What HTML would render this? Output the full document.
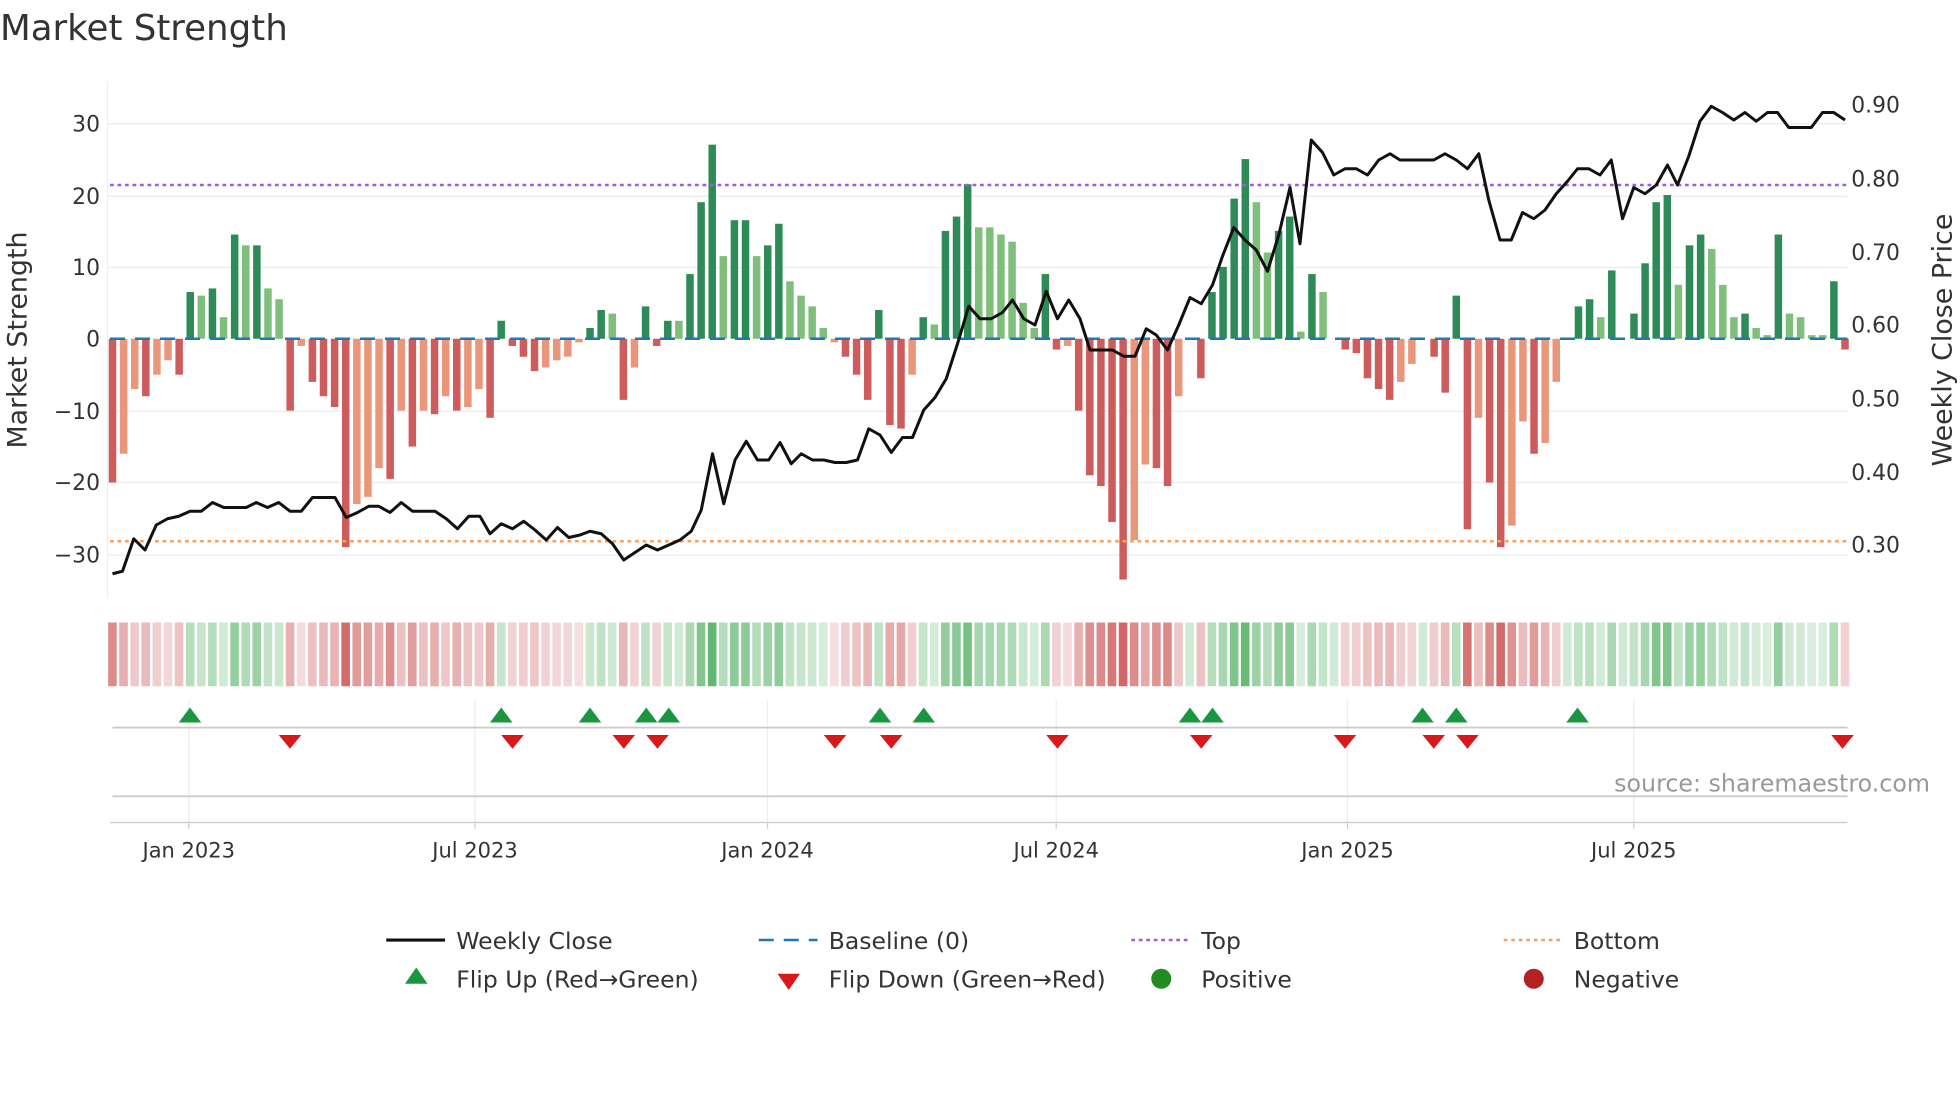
<!DOCTYPE html>
<html><head><meta charset="utf-8"><style>
html,body{margin:0;padding:0;background:#fff;width:1960px;height:1102px;overflow:hidden}
svg text{font-family:"DejaVu Sans","Liberation Sans",sans-serif;fill:#333}
</style></head><body>
<svg id="s" width="1960" height="1102" viewBox="0 0 1568 881.6" xmlns="http://www.w3.org/2000/svg">
<rect width="1568" height="882" fill="#fff"/>
<text x="0" y="32" font-size="28.5" fill="#333">Market Strength</text>
<g stroke="#ececec" stroke-width="1">
<line x1="86" x2="1478" y1="99" y2="99"/><line x1="86" x2="1478" y1="157" y2="157"/><line x1="86" x2="1478" y1="214" y2="214"/><line x1="86" x2="1478" y1="329" y2="329"/><line x1="86" x2="1478" y1="386" y2="386"/><line x1="86" x2="1478" y1="444" y2="444"/>
</g>
<line x1="86" x2="86" y1="65" y2="478" stroke="#eee"/>
<g font-size="17.5" text-anchor="end">
<text x="80" y="105">30</text><text x="80" y="163">20</text><text x="80" y="220">10</text><text x="80" y="277">0</text><text x="80" y="335">−10</text><text x="80" y="392">−20</text><text x="80" y="450">−30</text>
</g>
<g font-size="17.5">
<text x="1481" y="90">0.90</text><text x="1481" y="149">0.80</text><text x="1481" y="208">0.70</text><text x="1481" y="266">0.60</text><text x="1481" y="325">0.50</text><text x="1481" y="384">0.40</text><text x="1481" y="442">0.30</text>
</g>
<text transform="translate(21,272) rotate(-90)" font-size="21.5" text-anchor="middle">Market Strength</text>
<text transform="translate(1561,272) rotate(-90)" font-size="21.5" text-anchor="middle">Weekly Close Price</text>
<g id="bars"></g>
<line x1="88" x2="1478" y1="271" y2="271" stroke="#1f77b4" stroke-width="2" stroke-dasharray="12,8"/>
<line x1="88" x2="1478" y1="148" y2="148" stroke="#9b5de5" stroke-width="2" stroke-dasharray="3,3"/>
<line x1="88" x2="1478" y1="433" y2="433" stroke="#f4a261" stroke-width="2" stroke-dasharray="3,3"/>
<polyline id="line" fill="none" stroke="#111" stroke-width="2.4" stroke-linejoin="round"/>
<g id="heat"></g>
<g stroke="#eee"><line x1="151" x2="151" y1="560" y2="658"/><line x1="380" x2="380" y1="560" y2="658"/><line x1="614" x2="614" y1="560" y2="658"/><line x1="845" x2="845" y1="560" y2="658"/><line x1="1078" x2="1078" y1="560" y2="658"/><line x1="1307" x2="1307" y1="560" y2="658"/></g>
<line x1="90" x2="1478" y1="582" y2="582" stroke="#ccc" stroke-width="1.5"/>
<line x1="90" x2="1478" y1="637" y2="637" stroke="#ccc" stroke-width="1.5"/>
<g id="flips"></g>
<text x="1544" y="633" font-size="19" text-anchor="end" style="fill:#999">source: sharemaestro.com</text>
<line x1="88" x2="1478" y1="658" y2="658" stroke="#ccc"/>
<g stroke="#ccc"><line x1="151" x2="151" y1="658" y2="663"/><line x1="380" x2="380" y1="658" y2="663"/><line x1="614" x2="614" y1="658" y2="663"/><line x1="845" x2="845" y1="658" y2="663"/><line x1="1078" x2="1078" y1="658" y2="663"/><line x1="1307" x2="1307" y1="658" y2="663"/></g>
<g font-size="16.8" text-anchor="middle">
<text x="151" y="686">Jan 2023</text><text x="380" y="686">Jul 2023</text><text x="614" y="686">Jan 2024</text><text x="845" y="686">Jul 2024</text><text x="1078" y="686">Jan 2025</text><text x="1307" y="686">Jul 2025</text>
</g>
<g font-size="18.8">
<line x1="309" x2="356" y1="752" y2="752" stroke="#111" stroke-width="2.5"/><text x="365" y="759">Weekly Close</text>
<line x1="607" x2="654" y1="752" y2="752" stroke="#1f77b4" stroke-width="2" stroke-dasharray="12,8"/><text x="663" y="759">Baseline (0)</text>
<line x1="905" x2="950" y1="752" y2="752" stroke="#9b5de5" stroke-width="2" stroke-dasharray="3,3"/><text x="961" y="759">Top</text>
<line x1="1203" x2="1248" y1="752" y2="752" stroke="#f4a261" stroke-width="2" stroke-dasharray="3,3"/><text x="1259" y="759">Bottom</text>
<polygon points="333,774 324,787 342,787" fill="#1a9641"/><text x="365" y="790">Flip Up (Red→Green)</text>
<polygon points="622,779 640,779 631,792" fill="#d7191c"/><text x="663" y="790">Flip Down (Green→Red)</text>
<circle cx="929" cy="783" r="8" fill="#228b22"/><text x="961" y="790">Positive</text>
<circle cx="1227" cy="783" r="8" fill="#b22222"/><text x="1259" y="790">Negative</text>
</g>
</svg>
<script>
var v=[-20,-16,-7,-8,-5,-3,-5,6.5,6,7,3,14.5,13,13,7,5.5,-10,-1,-6,-8,-9.5,-29,-23,-22,-18,-19.5,-10,-15,-10,-10.5,-8,-10,-9.5,-7,-11,2.5,-1,-2.5,-4.5,-4,-3,-2.5,-0.5,1.5,4,3.5,-8.5,-4,4.5,-1,2.5,2.5,9,19,27,11.5,16.5,16.5,11.5,13,16,8,6,4.5,1.5,-0.5,-2.5,-5,-8.5,4,-12,-12.5,-5,3,2,15,17,21.5,15.5,15.5,14.5,13.5,5,1.5,9,-1.5,-1,-10,-19,-20.5,-25.5,-33.5,-28,-17.5,-18,-20.5,-8,0,-5.5,6.5,10,19.5,25,19,12,15,17,1,9,6.5,0,-1.5,-2,-5.5,-7,-8.5,-6,-3.5,0,-2.5,-7.5,6,-26.5,-11,-20,-29,-26,-11.5,-16,-14.5,-6,0,4.5,5.5,3,9.5,0,3.5,10.5,19,20,7.5,13,14.5,12.5,7.5,3,3.5,1.5,0.5,14.5,3.5,3,0.5,0.5,8,-1.5];
var n=v.length,step=(1476-90)/(n-1);
var lt={};[98,107,125,134,161,179,197,214,223,241,286,295,303,321,339,357,375,384,437,446,455,464,490,508,544,579,606,633,641,650,659,668,730,748,784,793,802,810,819,828,855,908,917,943,1005,1014,1040,1058,1120,1129,1183,1209,1218,1236,1245,1280,1342,1369,1378,1387,1405,1414,1431,1440,1449,1458].forEach(function(x){lt[Math.round((x-90)/step)]=1});
var b='',h='';
for(var i=0;i<n;i++){var x=90+i*step,val=v[i],y0=271,hgt=Math.abs(val)*5.75,c;
if(val>=0)c=lt[i]?'#7fbf7b':'#2e8b57';else c=lt[i]?'#e9967a':'#cd5c5c';
if(hgt>0.5)b+='<rect x="'+(x-3)+'" y="'+(val>=0?y0-hgt:y0)+'" width="6" height="'+hgt+'" fill="'+c+'"/>';
var a=0.22+Math.min(Math.abs(val),30)/30*0.6;if(lt[i])a*=0.8;
var hc=val>=0?'rgba(46,160,67,'+a.toFixed(2)+')':'rgba(200,70,70,'+a.toFixed(2)+')';
h+='<rect x="'+(x-4.5+1)+'" y="498" width="'+(step-2)+'" height="51" fill="'+hc+'"/>';}
document.getElementById('bars').innerHTML=b;document.getElementById('heat').innerHTML=h;
var p=[[90,459],[98,457],[107,431],[116,440],[125,420],[134,415],[143,413],[152,409],[161,409],[170,402],[179,406],[188,406],[197,406],[205,402],[214,406],[223,402],[232,409],[241,409],[250,398],[259,398],[268,398],[277,414],[286,410],[295,405],[303,405],[312,410],[321,402],[330,409],[339,409],[348,409],[357,415],[366,423],[375,413],[384,413],[392,427],[401,419],[410,423],[419,417],[428,424],[437,432],[446,422],[455,430],[464,428],[472,425],[481,427],[490,435],[499,448],[508,442],[517,436],[526,440],[535,436],[544,432],[553,425],[561,408],[570,363],[579,403],[588,368],[597,353],[606,368],[615,368],[624,354],[633,371],[641,363],[650,368],[659,368],[668,370],[677,370],[686,368],[695,343],[704,348],[713,362],[722,350],[730,350],[739,328],[748,318],[757,303],[766,275],[775,245],[784,255],[793,255],[802,250],[810,240],[819,255],[828,260],[837,233],[846,255],[855,240],[864,255],[872,280],[881,280],[890,280],[899,285],[908,285],[917,263],[925,268],[934,280],[943,260],[952,238],[961,243],[970,228],[978,205],[987,182],[996,192],[1005,200],[1014,217],[1023,188],[1032,150],[1040,195],[1049,112],[1058,122],[1067,140],[1076,135],[1085,135],[1094,140],[1103,128],[1112,123],[1120,128],[1129,128],[1138,128],[1147,128],[1156,123],[1165,128],[1174,135],[1183,123],[1191,160],[1200,192],[1209,192],[1218,170],[1227,175],[1236,168],[1245,155],[1254,145],[1262,135],[1271,135],[1280,140],[1289,128],[1298,175],[1307,150],[1316,155],[1325,148],[1334,132],[1342,148],[1351,125],[1360,97],[1369,85],[1378,90],[1387,96],[1396,90],[1405,97],[1414,90],[1422,90],[1431,102],[1440,102],[1449,102],[1458,90],[1467,90],[1476,96]];
document.getElementById('line').setAttribute('points',p.map(function(q){return q.join(',')}).join(' '));
var f='';[152,401,472,517,535,704,739,952,970,1138,1165,1262].forEach(function(x){f+='<polygon points="'+x+',566 '+(x-9)+',578 '+(x+9)+',578" fill="#1a9641"/>'});
[232,410,499,526,668,713,846,961,1076,1147,1174,1474].forEach(function(x){f+='<polygon points="'+(x-9)+',588 '+(x+9)+',588 '+x+',599" fill="#d7191c"/>'});
document.getElementById('flips').innerHTML=f;
</script>
</body></html>
